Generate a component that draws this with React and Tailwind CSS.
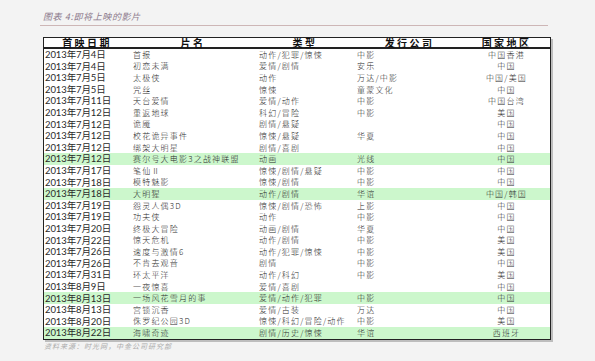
import React from "react";

const rows = [
  ["2013年7月4日", "首报", "动作/犯罪/惊悚", "中影", "中国香港", false],
  ["2013年7月4日", "初恋未满", "爱情/剧情", "安乐", "中国", false],
  ["2013年7月5日", "太极侠", "动作", "万达/中影", "中国/美国", false],
  ["2013年7月5日", "咒丝", "惊悚", "童蒙文化", "中国", false],
  ["2013年7月11日", "天台爱情", "爱情/动作", "中影", "中国台湾", false],
  ["2013年7月12日", "重返地球", "科幻/冒险", "中影", "美国", false],
  ["2013年7月12日", "诡魇", "剧情/悬疑", "", "中国", false],
  ["2013年7月12日", "校花诡异事件", "惊悚/悬疑", "华夏", "中国", false],
  ["2013年7月12日", "绑架大明星", "剧情/喜剧", "", "中国", false],
  ["2013年7月12日", "赛尔号大电影3之战神联盟", "动画", "光线", "中国", true],
  ["2013年7月17日", "笔仙Ⅱ", "惊悚/剧情/悬疑", "中影", "中国", false],
  ["2013年7月18日", "模特魅影", "惊悚/剧情", "中影", "中国", false],
  ["2013年7月18日", "大明猩", "动作/剧情", "华谊", "中国/韩国", true],
  ["2013年7月19日", "怨灵人偶3D", "惊悚/剧情/恐怖", "上影", "中国", false],
  ["2013年7月19日", "功夫侠", "动作", "中影", "中国", false],
  ["2013年7月20日", "终极大冒险", "动画/剧情", "华夏", "中国", false],
  ["2013年7月22日", "惊天危机", "动作/剧情", "中影", "美国", false],
  ["2013年7月26日", "速度与激情6", "动作/犯罪/惊悚", "中影", "美国", false],
  ["2013年7月26日", "不肯去观音", "剧情", "中影", "中国", false],
  ["2013年7月31日", "环太平洋", "动作/科幻", "中影", "美国", false],
  ["2013年8月9日", "一夜惊喜", "爱情/喜剧", "", "中国", false],
  ["2013年8月13日", "一场风花雪月的事", "爱情/动作/犯罪", "中影", "中国", true],
  ["2013年8月13日", "宫锁沉香", "爱情/古装", "万达", "中国", false],
  ["2013年8月20日", "侏罗纪公园3D", "惊悚/科幻/冒险/动作", "中影", "美国", false],
  ["2013年8月22日", "海啸奇迹", "剧情/历史/惊悚", "华谊", "西班牙", true],
];

const cjk = "font-['Noto_Sans_CJK_SC',sans-serif]";

export default function App() {
  return (
    <div className="w-[595px] h-[361px] bg-[#f3f3f3] overflow-hidden relative">
      <div className="pl-[43px] pt-[11px] h-[25px]">
        <div className={`${cjk} italic text-[9px] leading-[12px] text-[#8c7a8c] tracking-[0.6px]`}>
          图表 4:即将上映的影片
        </div>
      </div>
      <div className="ml-[40px] w-[508px] h-px bg-[#cdb6b6]" />
      <div className="ml-[43px] mt-[11px] w-[508px] border border-[#222] bg-white shadow-[2px_2px_0_#bdbdbd]">
        <div className={`flex h-[11px] items-center border-b-2 border-[#222] ${cjk} font-bold text-[10px] leading-none text-[#111] tracking-[2.4px]`}>
          <div className="w-[84px] text-center pl-[2px]">首映日期</div>
          <div className="w-[130px] text-center">片名</div>
          <div className="w-[98px] text-center pr-[4px]">类型</div>
          <div className="w-[107px] text-center">发行公司</div>
          <div className="w-[87px] text-center">国家地区</div>
        </div>
        {rows.map((r, i) => (
          <div
            key={i}
            className={`flex h-[11.6px] items-center leading-none text-[#2a2a2a] ${r[5] ? "bg-[#ccf7cc]" : ""}`}
          >
            <div className="w-[84px] pl-[1px] text-[9.5px] font-['Lato','Noto_Sans_CJK_SC',sans-serif] whitespace-nowrap tracking-[-0.1px]">
              {r[0]}
            </div>
            <div className={`w-[130px] pl-[5px] ${cjk} font-light text-[8px] tracking-[1.2px] whitespace-nowrap`}>{r[1]}</div>
            <div className={`w-[98px] pl-[1px] ${cjk} font-light text-[8px] tracking-[1.2px] whitespace-nowrap`}>{r[2]}</div>
            <div className={`w-[107px] pl-[1px] ${cjk} font-light text-[8px] tracking-[1.2px] whitespace-nowrap`}>{r[3]}</div>
            <div className={`w-[87px] text-center ${cjk} font-light text-[8px] tracking-[1.2px] whitespace-nowrap`}>{r[4]}</div>
          </div>
        ))}
      </div>
      <div className={`pl-[44px] pt-[2px] ${cjk} italic text-[7px] leading-[9px] text-[#ababab] tracking-[1px]`}>
        资料来源：时光网，中金公司研究部
      </div>
    </div>
  );
}
